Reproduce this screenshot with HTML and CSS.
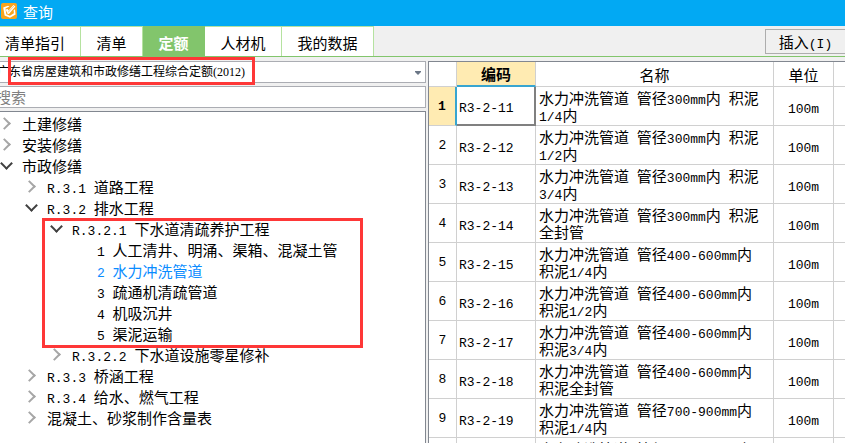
FILE: index.html
```html
<!DOCTYPE html>
<html lang="zh-CN">
<head>
<meta charset="utf-8">
<title>查询</title>
<link rel="stylesheet" href="styles.css">
</head>
<body>
<header class="titlebar">
  <svg class="logo" viewBox="0 0 16 16" aria-hidden="true">
    <rect width="16" height="16" rx="2" fill="#f9a41c"/>
    <path d="M2.2 4.6 7 2.8l1.5.8-4 2 .8 5.6 3.6 1.6 4-2.6-.3-3 1.4-1 .6 5.2-5.6 3.4-5.4-2.2z" fill="#fff"/>
    <path d="M4.6 6.6 6.6 6l1 1.6L12.4 2l2 1.6-6.2 7.2-1.4.4z" fill="#fff"/>
    <path d="M7 9.4 13 3" fill="none" stroke="#f6b74d" stroke-width=".7"/>
  </svg>
  <h1>查询</h1>
</header>
<nav class="tabs">
  <button class="tab tab-first">清单指引</button>
  <button class="tab tab-short">清单</button>
  <button class="tab tab-short active">定额</button>
  <button class="tab tab-mid">人材机</button>
  <button class="tab tab-long">我的数据</button>
  <button class="insert">插入<span class="n">(I)</span></button>
</nav>
<main class="panes">
  <section class="left">
    <div class="combo">
      <select aria-label="定额库"><option>广东省房屋建筑和市政修缮工程综合定额(2012)</option></select>
      <svg class="caret" viewBox="0 0 6 4" aria-hidden="true"><path d="M0 0h6v1L3 4 0 1z" fill="#6b7686"/></svg>
      <span class="mark mark-combo"></span>
    </div>
    <input class="search" type="text" placeholder="搜索" aria-label="搜索">
    <div class="tree">
      <ul>
        <li><div class="row"><button class="tg" aria-label="展开"></button>土建修缮</div></li>
        <li><div class="row"><button class="tg" aria-label="展开"></button>安装修缮</div></li>
        <li><div class="row"><button class="tg open" aria-label="折叠"></button>市政修缮</div>
          <ul>
            <li><div class="row"><button class="tg" aria-label="展开"></button><span class="n">R.3.1 </span>道路工程</div></li>
            <li><div class="row"><button class="tg open" aria-label="折叠"></button><span class="n">R.3.2 </span>排水工程</div>
              <ul>
                <li class="marked"><div class="row"><button class="tg open" aria-label="折叠"></button><span class="n">R.3.2.1 </span>下水道清疏养护工程</div>
                  <ul>
                    <li class="row leaf"><span class="n">1 </span>人工清井、明涌、渠箱、混凝土管</li>
                    <li class="row leaf selected"><span class="n">2 </span>水力冲洗管道</li>
                    <li class="row leaf"><span class="n">3 </span>疏通机清疏管道</li>
                    <li class="row leaf"><span class="n">4 </span>机吸沉井</li>
                    <li class="row leaf"><span class="n">5 </span>渠泥运输</li>
                  </ul>
                  <span class="mark mark-tree"></span>
                </li>
                <li><div class="row"><button class="tg" aria-label="展开"></button><span class="n">R.3.2.2 </span>下水道设施零星修补</div></li>
              </ul>
            </li>
            <li><div class="row"><button class="tg" aria-label="展开"></button><span class="n">R.3.3 </span>桥涵工程</div></li>
            <li><div class="row"><button class="tg" aria-label="展开"></button><span class="n">R.3.4 </span>给水、燃气工程</div></li>
            <li><div class="row"><button class="tg" aria-label="展开"></button>混凝土、砂浆制作含量表</div></li>
          </ul>
        </li>
      </ul>
    </div>
  </section>
  <section class="right">
    <table>
      <colgroup><col class="c-no"><col class="c-code"><col><col class="c-unit"><col class="c-rest"></colgroup>
      <thead><tr><th></th><th class="current">编码</th><th>名称</th><th>单位</th><th></th></tr></thead>
      <tbody>
        <tr class="picked"><th>1</th><td><span class="n">R3-2-11</span></td><td>水力冲洗管道<span class="n"> </span>管径<span class="n">300mm</span>内<span class="n"> </span>积泥<br><span class="n">1/4</span>内</td><td><span class="n">100m</span></td><td></td></tr>
        <tr><th>2</th><td><span class="n">R3-2-12</span></td><td>水力冲洗管道<span class="n"> </span>管径<span class="n">300mm</span>内<span class="n"> </span>积泥<br><span class="n">1/2</span>内</td><td><span class="n">100m</span></td><td></td></tr>
        <tr><th>3</th><td><span class="n">R3-2-13</span></td><td>水力冲洗管道<span class="n"> </span>管径<span class="n">300mm</span>内<span class="n"> </span>积泥<br><span class="n">3/4</span>内</td><td><span class="n">100m</span></td><td></td></tr>
        <tr><th>4</th><td><span class="n">R3-2-14</span></td><td>水力冲洗管道<span class="n"> </span>管径<span class="n">300mm</span>内<span class="n"> </span>积泥<br>全封管</td><td><span class="n">100m</span></td><td></td></tr>
        <tr><th>5</th><td><span class="n">R3-2-15</span></td><td>水力冲洗管道<span class="n"> </span>管径<span class="n">400-600mm</span>内<br>积泥<span class="n">1/4</span>内</td><td><span class="n">100m</span></td><td></td></tr>
        <tr><th>6</th><td><span class="n">R3-2-16</span></td><td>水力冲洗管道<span class="n"> </span>管径<span class="n">400-600mm</span>内<br>积泥<span class="n">1/2</span>内</td><td><span class="n">100m</span></td><td></td></tr>
        <tr><th>7</th><td><span class="n">R3-2-17</span></td><td>水力冲洗管道<span class="n"> </span>管径<span class="n">400-600mm</span>内<br>积泥<span class="n">3/4</span>内</td><td><span class="n">100m</span></td><td></td></tr>
        <tr><th>8</th><td><span class="n">R3-2-18</span></td><td>水力冲洗管道<span class="n"> </span>管径<span class="n">400-600mm</span>内<br>积泥全封管</td><td><span class="n">100m</span></td><td></td></tr>
        <tr><th>9</th><td><span class="n">R3-2-19</span></td><td>水力冲洗管道<span class="n"> </span>管径<span class="n">700-900mm</span>内<br>积泥<span class="n">1/4</span>内</td><td><span class="n">100m</span></td><td></td></tr>
        <tr><th></th><td></td><td>水力冲洗管道<span class="n"> </span>管径<span class="n">700-900mm</span>内</td><td></td><td></td></tr>
      </tbody>
    </table>
  </section>
</main>
</body>
</html>
```
FILE: styles.css
```css
* { box-sizing: border-box; }

body {
  margin: 0;
  height: 100vh;
  overflow: hidden;
  display: flex;
  flex-direction: column;
  background: #f0f0f0;
  color: #000;
  font: 15px/17px "Noto Sans CJK SC", sans-serif;
}

button, input, select { font: inherit; color: inherit; margin: 0; }

ul { list-style: none; margin: 0; padding: 0; }

/* half-width letters and digits; takes no line height of its own */
.n {
  font-family: "Liberation Mono", monospace;
  font-size: 13px;
  line-height: 0;
  white-space: pre;
}

.titlebar {
  display: flex;
  align-items: center;
  gap: 6px;
  height: 26px;
  flex: none;
  padding: 0 1px 4px;
  background: #02a9f3;
}
.logo { width: 16px; height: 16px; }
.titlebar h1 {
  margin: 0;
  color: #fff;
  font-size: 15px;
  font-weight: 400;
}

.tabs {
  display: flex;
  height: 31px;
  flex: none;
  border-bottom: 1px solid #82c56c;
}
.tab {
  padding: 2px 0 0;
  border: 0;
  border-top: 1px solid #b5e2a0;
  border-right: 1px solid #b5e2a0;
  background: #fff;
}
.tab-first { width: 81px; padding-right: 10px; }
.tab-short { width: 62px; }
.tab-mid { width: 77px; }
.tab-long { width: 92px; }
.tab.active {
  background: #82c56c;
  border-color: #82c56c;
  color: #fff;
  font-weight: 700;
}
.insert {
  margin: 3px 0 2px auto;
  width: 80px;
  padding: 0;
  border: 1px solid #adadad;
  border-right: 0;
  background: #f0f0f0;
}

.panes {
  flex: 1;
  min-height: 0;
  display: grid;
  grid-template-columns: 426px 1fr;
  column-gap: 2px;
  padding-top: 4px;
}

.left {
  display: flex;
  flex-direction: column;
  gap: 3px;
  margin-left: -8px;
  min-height: 0;
}
.combo { position: relative; height: 22px; flex: none; }
.combo select {
  display: block;
  appearance: none;
  width: 100%;
  height: 22px;
  padding: 0 20px 0 4px;
  border: 1px solid #abadb3;
  border-radius: 0;
  background: #fff;
  font: 12px/20px "Liberation Serif", "Noto Sans CJK SC", serif;
}
.caret {
  position: absolute;
  right: 5px;
  top: 10px;
  width: 6px;
  height: 4px;
}
.search {
  width: 100%;
  height: 22px;
  flex: none;
  padding: 0 3px 2px;
  border: 1px solid #abadb3;
  background: #fff;
}
.search::placeholder { color: #808080; opacity: 1; }

.tree {
  flex: 1;
  min-height: 0;
  padding: 2px 0 0 7px;
  overflow: hidden;
  border: 1px solid #828790;
  border-bottom: 0;
  background: #fff;
}
.tree ul ul { padding-left: 25px; }
.row {
  height: 21px;
  line-height: 20px;
  white-space: pre;
}
.leaf { padding-left: 22px; }
.selected { color: #0a8cff; }

.tg {
  position: relative;
  width: 22px;
  height: 20px;
  vertical-align: top;
  padding: 0;
  border: 0;
  background: none;
}
.tg::before {
  content: "";
  position: absolute;
  left: 0;
  top: 5px;
  width: 7px;
  height: 7px;
  border: solid #a6a6a6;
  border-width: 2px 2px 0 0;
  transform: rotate(45deg);
}
.tg.open::before {
  left: 2px;
  top: 3px;
  border-color: #404040;
  transform: rotate(135deg);
}

/* red outlines over the panes */
.mark {
  position: absolute;
  z-index: 1;
  border: 3px solid #fe3737;
  pointer-events: none;
}
.mark-combo { left: 16px; top: -4px; width: 247px; height: 28px; }
.marked { position: relative; }
.mark-tree { left: -8px; top: -1px; width: 321px; height: 130px; }

.right {
  min-width: 0;
  overflow: hidden;
  border-top: 1px solid #828790;
  border-left: 1px solid #828790;
  background: #fff;
}
table {
  width: 100%;
  table-layout: fixed;
  border-collapse: separate;
  border-spacing: 0;
}
.c-no { width: 28px; }
.c-code { width: 79px; }
.c-unit { width: 60px; }
.c-rest { width: 11px; }
th, td {
  padding: 0 2px;
  height: 39px;
  border-right: 1px solid #d0d0d0;
  border-bottom: 1px solid #d0d0d0;
  font-weight: 400;
  text-align: left;
  white-space: nowrap;
}
thead th { height: 25px; text-align: center; }
thead .current {
  background: #ffebb2;
  border-bottom: 2px solid #38a5d0;
  font-weight: 700;
}
tbody th {
  text-align: center;
  font: 13px/17px "Liberation Mono", monospace;
}
td:nth-child(4) { text-align: center; }
td:last-child, th:last-child { border-right: 0; }
tbody td:nth-child(3) { padding-left: 3px; }
.picked th {
  background: #ffebb2;
  border-right: 2px solid #38a5d0;
  font-weight: 700;
}
.picked td:nth-child(2) {
  border-right: 2px solid #808080;
  border-bottom: 2px solid #808080;
}
tbody tr:last-child td { vertical-align: top; padding-top: 2px; }
```
